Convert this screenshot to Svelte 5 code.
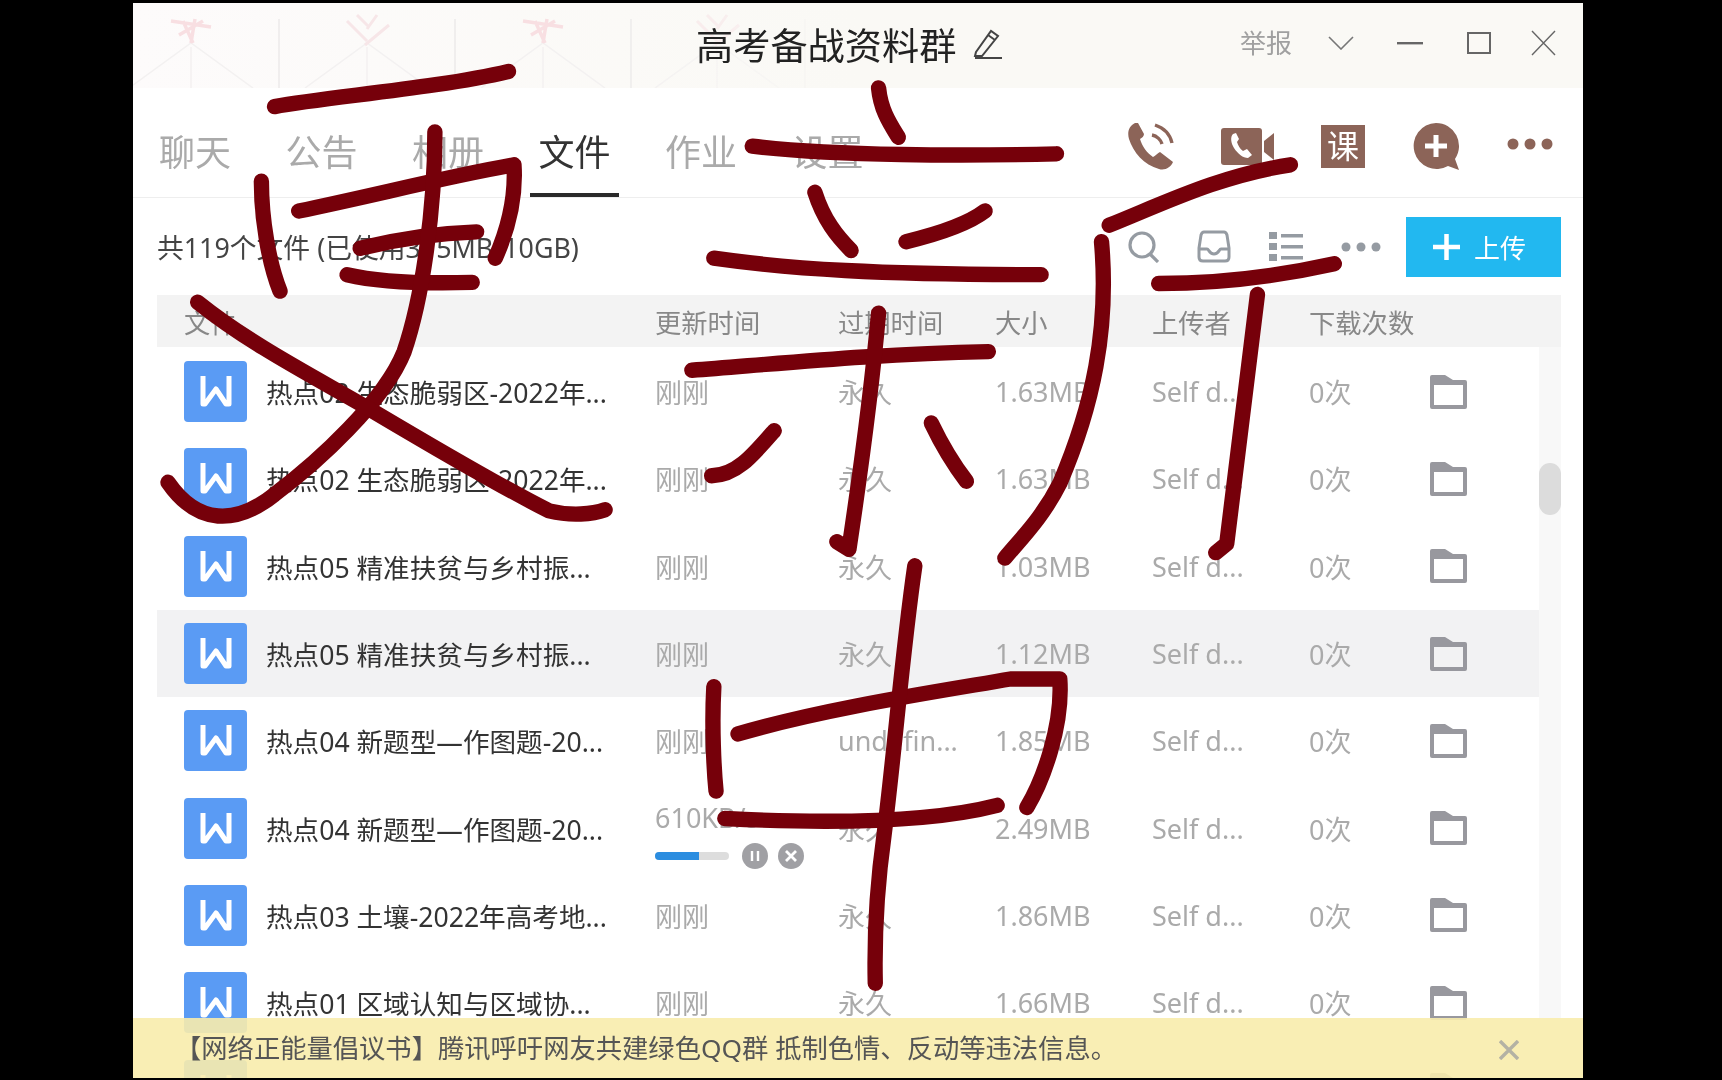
<script>
  const tabs = ['聊天', '公告', '相册', '文件', '作业', '设置'];
  const columns = ['文件', '更新时间', '过期时间', '大小', '上传者', '下载次数'];
  const topic2 = '热点02 生态脆弱区-2022年...';
  const topic5 = '热点05 精准扶贫与乡村振...';
  const topic4 = '热点04 新题型—作图题-20...';
  const files = [
    { name: topic2, time: '刚刚', expire: '永久', size: '1.63MB', owner: 'Self d...', count: '0次' },
    { name: topic2, time: '刚刚', expire: '永久', size: '1.63MB', owner: 'Self d...', count: '0次' },
    { name: topic5, time: '刚刚', expire: '永久', size: '1.03MB', owner: 'Self d...', count: '0次' },
    { name: topic5, time: '刚刚', expire: '永久', size: '1.12MB', owner: 'Self d...', count: '0次', active: true },
    { name: topic4, time: '刚刚', expire: 'undefin...', size: '1.85MB', owner: 'Self d...', count: '0次' },
    { name: topic4, expire: '永久', size: '2.49MB', owner: 'Self d...', count: '0次', speed: '610KB/s', progress: 60 },
    { name: '热点03 土壤-2022年高考地...', time: '刚刚', expire: '永久', size: '1.86MB', owner: 'Self d...', count: '0次' },
    { name: '热点01 区域认知与区域协...', time: '刚刚', expire: '永久', size: '1.66MB', owner: 'Self d...', count: '0次' },
    // only the top of this row peeks out under the notice
    {}
  ];
  // freehand ink scrawled over the recording, in reference coordinates
  const ink = [
    'M250 97 C300 88 400 80 463 65',
    'M238 165 C238 200 245 240 255 265',
    'M272 192 C340 178 410 160 468 150 C470 180 462 210 451 235',
    'M328 226 C360 218 400 212 434 211',
    'M316 250 C350 258 395 258 430 257',
    'M396 120 C396 190 385 270 368 320 C350 365 290 420 250 450 C215 478 180 478 153 439',
    'M180 275 C230 315 290 345 341 375 C400 410 460 445 500 465 C520 470 540 468 551 464',
    'M800 80 C802 100 810 112 818 125',
    'M685 133 C760 142 880 142 962 140',
    'M742 175 C750 200 762 215 775 228',
    'M825 220 C850 214 880 205 897 192',
    'M650 235 C720 245 800 250 948 250',
    'M630 337 C720 330 800 322 900 320',
    'M800 285 C795 340 785 420 773 500 L762 493',
    'M705 392 C685 415 670 433 648 433',
    'M848 385 C860 410 870 425 880 438',
    'M1175 150 C1110 160 1060 185 1010 205',
    'M1003 220 C1010 300 995 370 965 440 C950 470 930 490 915 508',
    'M1055 258 C1120 258 1170 250 1215 240',
    'M1145 268 C1135 350 1125 430 1117 495 L1107 503',
    'M650 625 C648 660 650 700 652 720',
    'M672 668 C750 645 850 630 920 618 L965 618 C968 660 950 710 935 735',
    'M660 745 C760 750 850 748 908 733',
    'M833 515 C822 590 815 680 805 760 C798 810 796 850 797 895'
  ];
</script>

<div class="page">
  <div class="window">
    <header class="titlebar">
      <svg class="paper" width="700" height="85" viewBox="0 0 700 85">
        <defs>
          <linearGradient id="fade" x1="0" x2="1">
            <stop offset="0" stop-color="#fff" />
            <stop offset="0.7" stop-color="#fff" />
            <stop offset="1" stop-color="#222" />
          </linearGradient>
          <mask id="paperMask"><rect width="700" height="85" fill="url(#fade)" /></mask>
        </defs>
        <g mask="url(#paperMask)" fill="none">
          {#each [58, 234, 410, 584] as x, i}
            <path d="M{x} 44V85M{x - 62} 85L{x} 40L{x + 62} 85" stroke="#f3f1f1" stroke-width="1.5" />
            <path d="M{x + 88} 16V85" stroke="#eceaea" stroke-width="1.5" />
            {#if i % 2 === 0}
              <path d="M{x - 20} 18L{x + 20} 24M{x - 12} 32L{x + 12} 18M{x} 40L{x + 4} 16M{x - 8} 18L{x + 2} 40" stroke="#f8dfe2" stroke-width="3.5" />
            {:else}
              <path d="M{x - 20} 18L{x} 38M{x + 22} 22L{x - 2} 42M{x - 10} 12L{x + 2} 24M{x + 10} 12L{x} 26" stroke="#f7e6e8" stroke-width="3" />
            {/if}
          {/each}
        </g>
      </svg>
      <h1>高考备战资料群</h1>
      <svg class="pencil" width="30" height="30" viewBox="0 0 30 30" fill="none" stroke="#444" stroke-width="2">
        <path d="M3 23L18 2L25 7L9 27H2ZM15 6L22 11" />
        <path d="M2 29H29" />
      </svg>
      <div class="controls">
        <span class="report">举报</span>
        <svg width="26" height="14" viewBox="0 0 26 14" fill="none" stroke="#777" stroke-width="1.6"><path d="M1 1L13 13L25 1" /></svg>
        <svg class="minimize" width="26" height="3" viewBox="0 0 26 3"><rect width="26" height="2.4" fill="#666" /></svg>
        <svg class="maximize" width="24" height="22" viewBox="0 0 24 22" fill="none" stroke="#666" stroke-width="2"><rect x="1" y="1" width="22" height="20" /></svg>
        <svg class="close" width="25" height="26" viewBox="0 0 25 26" fill="none" stroke="#666" stroke-width="1.4"><path d="M1 1L24 25M24 1L1 25" /></svg>
      </div>
    </header>

    <nav class="tabs">
      {#each tabs as tab}
        <span class="tab" class:current={tab === '文件'}>{tab}</span>
      {/each}
      <div class="actions">
        <svg width="47" height="47" viewBox="0 0 47 47" fill="#8c6458">
          <path d="M8 0C2 3 0 9 2 16C6 29 17 42 32 46C38 48 44 44 46 39L33 29C31 30 28 33 26 34C20 30 15 23 13 16C15 15 17 13 17 11L11 0Z" />
          <path d="M25 12C30 13 34 17 35 21M28 2C37 5 43 11 45 20" fill="none" stroke="#8c6458" stroke-width="3.4" />
        </svg>
        <svg width="53" height="37" viewBox="0 0 53 37">
          <rect width="41" height="37" rx="3" fill="#8c6458" />
          <path d="M43 13L53 5V32L43 24Z" fill="#8c6458" />
          <path d="M12 6C9 9 10 15 13 20C17 26 22 30 27 30L31 27L26 21L22 23C19 21 17 17 16 14L18 11L15 5Z" fill="#fff" />
        </svg>
        <span class="lesson">课</span>
        <svg width="48" height="47" viewBox="0 0 48 47">
          <path d="M24 0A23 23 0 1 0 36 43L47 47L43 36A23 23 0 0 0 24 0Z" fill="#8c6458" />
          <path d="M24 12V34M13 23H35" stroke="#fff" stroke-width="5" />
        </svg>
        <svg class="more" width="46" height="12" viewBox="0 0 46 12" fill="#8c6458"><circle cx="6" cy="6" r="5.5" /><circle cx="23" cy="6" r="5.5" /><circle cx="40" cy="6" r="5.5" /></svg>
      </div>
    </nav>

    <section class="toolbar">
      <span class="summary">共119个文件 (已使用375MB/10GB)</span>
      <div class="tools">
        <svg width="31" height="32" viewBox="0 0 31 32" fill="none" stroke="#959ba2" stroke-width="3.2"><circle cx="14" cy="14" r="12" /><path d="M22 23L30 31" /></svg>
        <svg width="34" height="33" viewBox="0 0 34 33" fill="none" stroke="#959ba2" stroke-width="3">
          <path d="M7 2H27Q29 2 30 5L32 18V27Q32 31 28 31H6Q2 31 2 27V18L4 5Q5 2 7 2Z" />
          <path d="M2 19H10C12 19 12 24 17 24C22 24 22 19 24 19H32" />
        </svg>
        <svg width="34" height="29" viewBox="0 0 34 29" fill="#959ba2">
          {#each [0, 11, 22] as y}
            <rect y={y} width="8" height="7" /><rect x="12" y={y + 2} width="22" height="3.5" />
          {/each}
        </svg>
        <svg width="40" height="10" viewBox="0 0 40 10" fill="#959ba2"><circle cx="5" cy="5" r="4.5" /><circle cx="20" cy="5" r="4.5" /><circle cx="35" cy="5" r="4.5" /></svg>
        <button class="upload">
          <svg width="27" height="26" viewBox="0 0 27 26"><path d="M13.5 0V26M0 13H27" stroke="#fff" stroke-width="4.5" /></svg>
          上传
        </button>
      </div>
    </section>

    <div class="list">
      <div class="head grid">
        {#each columns as column}
          <span>{column}</span>
        {/each}
      </div>
      <div class="body">
        <div class="rows">
          {#each files as file}
            <div class="row grid" class:active={file.active}>
              <div class="name">
                <svg class="doc" width="63" height="61" viewBox="0 0 63 61">
                  <rect width="63" height="61" rx="4" fill="#5a9bf4" />
                  <path d="M19 15V43H21L32 28L42 43H45V15" fill="none" stroke="#fff" stroke-width="5" stroke-linejoin="round" />
                </svg>
                <span>{file.name ?? ''}</span>
              </div>
              {#if file.speed}
                <div class="transfer">
                  <span>{file.speed}</span>
                  <div class="progress-line">
                    <div class="bar"><div class="fill" style="width: {file.progress}%"></div></div>
                    <svg width="62" height="26" viewBox="0 0 62 26">
                      <circle cx="13" cy="13" r="13" fill="#a0a0a4" />
                      <path d="M10 8V18M16 8V18" stroke="#fff" stroke-width="2.4" />
                      <circle cx="49" cy="13" r="13" fill="#a0a0a4" />
                      <path d="M44 8L54 18M54 8L44 18" stroke="#fff" stroke-width="2.8" />
                    </svg>
                  </div>
                </div>
              {:else}
                <span>{file.time ?? ''}</span>
              {/if}
              <span>{file.expire ?? ''}</span>
              <span>{file.size ?? ''}</span>
              <span>{file.owner ?? ''}</span>
              <span>{file.count ?? ''}</span>
              <svg class="folder" width="37" height="34" viewBox="0 0 37 34">
                <path fill-rule="evenodd" fill="#98989e" d="M0 2Q0 0 2 0H15L23 5H35Q37 5 37 7V32Q37 34 35 34H2Q0 34 0 32ZM4 10V30H33V10Z" />
              </svg>
            </div>
          {/each}
        </div>
        <div class="scrollbar"><div class="thumb"></div></div>
      </div>
    </div>

    <footer class="notice">
      <span>【网络正能量倡议书】腾讯呼吁网友共建绿色QQ群 抵制色情、反动等违法信息。</span>
      <svg width="20" height="20" viewBox="0 0 20 20" fill="none" stroke="#b4b2a4" stroke-width="3.4"><path d="M1 1L19 19M19 1L1 19" /></svg>
    </footer>
  </div>

  <svg class="ink" viewBox="0 0 1568 983" preserveAspectRatio="none" fill="none" stroke="#76000a" stroke-width="14" stroke-linecap="round" stroke-linejoin="round">
    {#each ink as stroke}
      <path d={stroke} />
    {/each}
  </svg>
</div>

<style>
  :global(body) {
    margin: 0;
    background: #000;
  }
  .page {
    position: relative;
    width: 1722px;
    height: 1080px;
    padding: 3px 0 2px 133px;
    box-sizing: border-box;
    overflow: hidden;
    background: #000;
    font-family: "Noto Sans", "Noto Sans CJK SC", sans-serif;
  }
  .window {
    position: relative;
    width: 1450px;
    height: 1075px;
    display: flex;
    flex-direction: column;
    overflow: hidden;
    background: #fff;
    filter: blur(0.6px);
  }
  .titlebar {
    position: relative;
    flex: none;
    height: 85px;
    display: flex;
    align-items: center;
    padding: 0 27px 0 563px;
    box-sizing: border-box;
    background: linear-gradient(to right, #fdfbfb, #faf9f5 50%);
  }
  .paper {
    position: absolute;
    left: 0;
    top: 0;
  }
  h1 {
    position: relative;
    margin: -4px 0 0;
    font-size: 37.2px;
    font-weight: 400;
    color: #222;
    white-space: nowrap;
  }
  .pencil {
    position: relative;
    margin: -3px 0 0 17px;
  }
  .controls {
    margin-left: auto;
    display: flex;
    align-items: center;
    gap: 36px;
    margin-top: -5px;
  }
  .report {
    font-size: 26px;
    color: #a0a0a0;
    margin-top: -3px;
  }
  .minimize {
    margin-left: 7px;
  }
  .maximize {
    margin-left: 8px;
  }
  .close {
    margin-left: 4px;
  }
  .tabs {
    flex: none;
    height: 110px;
    display: flex;
    align-items: flex-end;
    gap: 37.5px;
    padding: 0 30px 0 17.5px;
    box-sizing: border-box;
    border-bottom: 1px solid #eee;
  }
  .tab {
    padding: 0 8.5px 16px;
    font-size: 36px;
    line-height: 48px;
    color: #aaa;
    border-bottom: 4px solid transparent;
  }
  .tab.current {
    color: #333;
    border-bottom-color: #2a2a2a;
  }
  .actions {
    margin-left: auto;
    align-self: center;
    display: flex;
    align-items: center;
    gap: 47px;
    margin-top: 7px;
  }
  .more {
    margin-top: -4px;
  }
  .lesson {
    width: 44px;
    height: 43px;
    display: flex;
    align-items: center;
    justify-content: center;
    background: #8c6458;
    color: #fff;
    font-size: 32px;
    line-height: 1;
  }
  .toolbar {
    flex: none;
    height: 97px;
    display: flex;
    align-items: center;
    justify-content: space-between;
    padding: 0 22px 0 24px;
    box-sizing: border-box;
  }
  .summary {
    font-size: 26.8px;
    color: #444;
  }
  .tools {
    display: flex;
    align-items: center;
    gap: 38px;
  }
  .upload {
    width: 155px;
    height: 60px;
    margin-left: -13px;
    padding: 0 8px 0 0;
    display: flex;
    align-items: center;
    justify-content: center;
    gap: 14px;
    border: 0;
    background: #22b8f0;
    color: #fff;
    font: inherit;
    font-size: 26px;
  }
  .list {
    flex: none;
    margin: 0 22px 0 24px;
    font-size: 27px;
  }
  .grid {
    display: grid;
    grid-template-columns: 471px 183px 157px 157px 157px 121px 37px;
    align-items: center;
    padding-left: 27px;
    box-sizing: border-box;
  }
  .head {
    height: 52px;
    background: #f3f3f3;
    color: #888;
    font-size: 26.3px;
  }
  .body {
    display: flex;
  }
  .rows {
    width: 1382px;
    padding-top: 1px;
  }
  .row {
    height: 87.3px;
    color: #aaa;
    white-space: nowrap;
  }
  .row.active {
    background: #f2f2f3;
  }
  .name {
    display: flex;
    align-items: center;
    gap: 19px;
    color: #333;
    font-size: 26.6px;
  }
  .doc,
  .folder {
    flex: none;
  }
  .transfer {
    display: flex;
    flex-direction: column;
    margin-top: 12px;
  }
  .transfer > span {
    line-height: 38px;
  }
  .progress-line {
    display: flex;
    align-items: center;
    gap: 13px;
    margin-top: 6px;
  }
  .bar {
    width: 74px;
    height: 8px;
    border-radius: 4px;
    background: #ddd;
    overflow: hidden;
  }
  .fill {
    height: 100%;
    background: #2b8de0;
  }
  .scrollbar {
    width: 22px;
    padding-top: 116px;
    background: #f8f8f8;
  }
  .thumb {
    height: 52px;
    border-radius: 11px;
    background: #dcdcdc;
  }
  .notice {
    position: absolute;
    left: 0;
    right: 0;
    bottom: 0;
    height: 60px;
    display: flex;
    align-items: center;
    justify-content: space-between;
    padding: 0 64px 3px 42px;
    box-sizing: border-box;
    background: rgba(248, 236, 172, 0.9);
    font-size: 26.3px;
    color: #555;
  }
  .notice svg {
    margin-top: 6px;
  }
  .ink {
    position: absolute;
    left: 0;
    top: 0;
    width: 1722px;
    height: 1080px;
  }
</style>
